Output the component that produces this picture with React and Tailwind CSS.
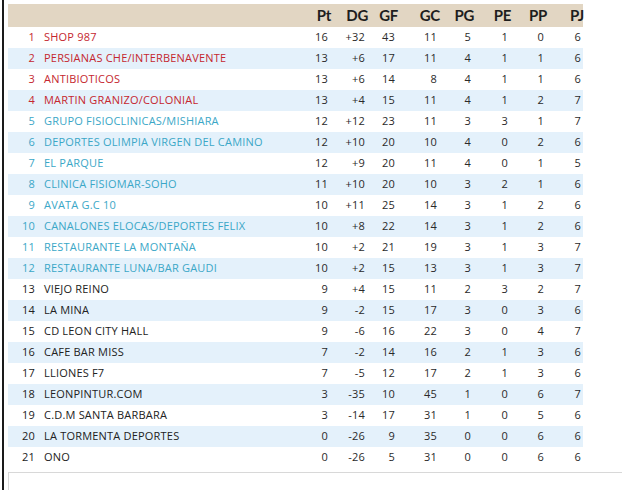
import React from "react";

const rows = [
  [1, "SHOP 987", 16, "+32", 43, 11, 5, 1, 0, 6],
  [2, "PERSIANAS CHE/INTERBENAVENTE", 13, "+6", 17, 11, 4, 1, 1, 6],
  [3, "ANTIBIOTICOS", 13, "+6", 14, 8, 4, 1, 1, 6],
  [4, "MARTIN GRANIZO/COLONIAL", 13, "+4", 15, 11, 4, 1, 2, 7],
  [5, "GRUPO FISIOCLINICAS/MISHIARA", 12, "+12", 23, 11, 3, 3, 1, 7],
  [6, "DEPORTES OLIMPIA VIRGEN DEL CAMINO", 12, "+10", 20, 10, 4, 0, 2, 6],
  [7, "EL PARQUE", 12, "+9", 20, 11, 4, 0, 1, 5],
  [8, "CLINICA FISIOMAR-SOHO", 11, "+10", 20, 10, 3, 2, 1, 6],
  [9, "AVATA G.C 10", 10, "+11", 25, 14, 3, 1, 2, 6],
  [10, "CANALONES ELOCAS/DEPORTES FELIX", 10, "+8", 22, 14, 3, 1, 2, 6],
  [11, "RESTAURANTE LA MONTAÑA", 10, "+2", 21, 19, 3, 1, 3, 7],
  [12, "RESTAURANTE LUNA/BAR GAUDI", 10, "+2", 15, 13, 3, 1, 3, 7],
  [13, "VIEJO REINO", 9, "+4", 15, 11, 2, 3, 2, 7],
  [14, "LA MINA", 9, "-2", 15, 17, 3, 0, 3, 6],
  [15, "CD LEON CITY HALL", 9, "-6", 16, 22, 3, 0, 4, 7],
  [16, "CAFE BAR MISS", 7, "-2", 14, 16, 2, 1, 3, 6],
  [17, "LLIONES F7", 7, "-5", 12, 17, 2, 1, 3, 6],
  [18, "LEONPINTUR.COM", 3, "-35", 10, 45, 1, 0, 6, 7],
  [19, "C.D.M SANTA BARBARA", 3, "-14", 17, 31, 1, 0, 5, 6],
  [20, "LA TORMENTA DEPORTES", 0, "-26", 9, 35, 0, 0, 6, 6],
  [21, "ONO", 0, "-26", 5, 31, 0, 0, 6, 6],
];

const heads = ["Pt", "DG", "GF", "GC", "PG", "PE", "PP", "PJ"];
const grid =
  "grid grid-cols-[28px_264px_30px_37px_30px_42px_34px_37px_36px_37px]";

export default function App() {
  return (
    <div className="w-[622px] h-[490px] bg-white overflow-hidden flex">
      <div className="ml-[2px] w-[2px] h-full bg-[#1a1a1a]" />
      <div className="flex-1 pl-[4px] pt-[4px] flex flex-col">
        <div className="w-[575px]">
          <div
            className={`${grid} h-[23px] items-center bg-[#e2d6c3] text-[#1e1e1e] font-bold text-[15px] tracking-[-0.3px] font-['Lato',sans-serif]`}
          >
            <div />
            <div />
            {heads.map((h) => (
              <div key={h} className="text-right mr-[-1px]">
                {h}
              </div>
            ))}
          </div>
          {rows.map((r, i) => {
            const color =
              r[0] <= 4
                ? "text-[#c5272f]"
                : r[0] <= 12
                ? "text-[#3ba7c7]"
                : "text-[#222]";
            return (
              <div
                key={r[0]}
                className={`${grid} h-[21px] items-center text-[11px] tracking-[0.2px] font-['Open_Sans',sans-serif] ${
                  i % 2 === 1 ? "bg-[#e4f1fb]" : "bg-white"
                }`}
              >
                <div className={`text-right pr-[1px] ${color}`}>{r[0]}</div>
                <div className={`pl-[8px] whitespace-nowrap ${color}`}>{r[1]}</div>
                {r.slice(2).map((v, j) => (
                  <div key={j} className="text-right pr-[2px] text-[#2a2a2a]">
                    {v}
                  </div>
                ))}
              </div>
            );
          })}
        </div>
        <div className="mt-[4px] flex-1 border-t border-l border-[#d8d8d8]" />
      </div>
    </div>
  );
}
